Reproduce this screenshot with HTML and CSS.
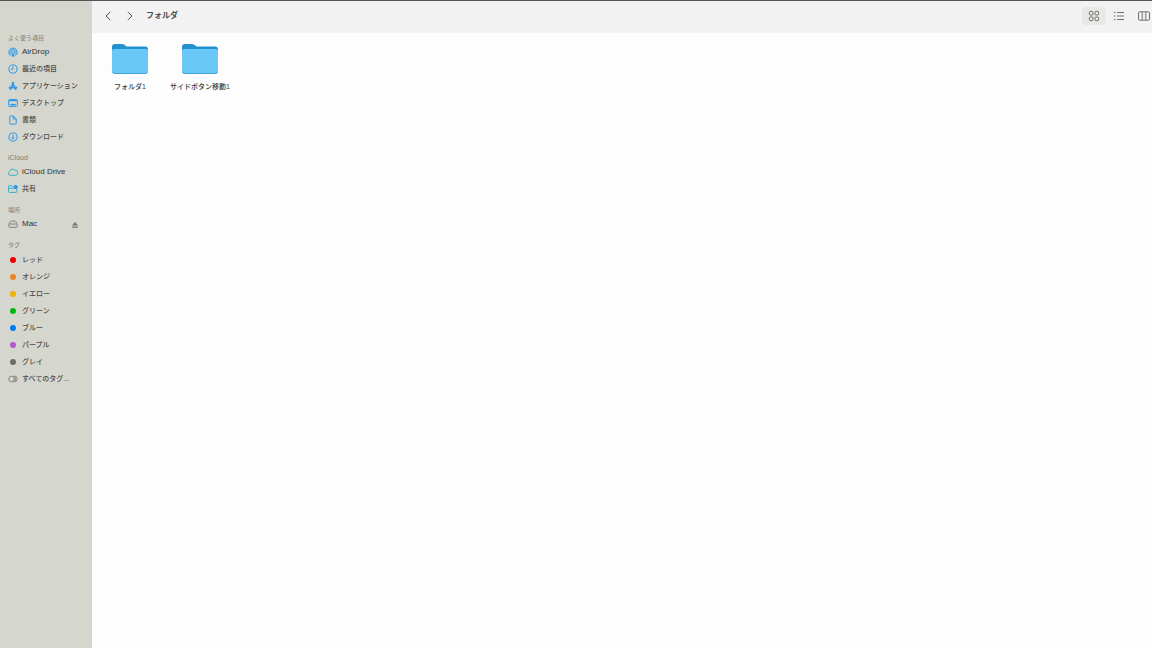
FILE: index.html
```html
<!DOCTYPE html>
<html lang="ja">
<head>
  <meta charset="UTF-8" />
  <meta name="viewport" content="width=device-width, initial-scale=1.0"/>
  <title>フォルダ</title>
  <link rel="stylesheet" href="styles.css">
</head>
<body>

  <nav class="sidebar">
    <h2>よく使う項目</h2>
    <ul>
      <li><a class="latin" href="#">
        <svg class="icon blue" viewBox="0 0 10 10"><circle class="halo" cx="5" cy="5" r="4.6"/><path d="M2.4 8.4A4.1 4.1 0 1 1 7.6 8.4" stroke-width="1"/><path d="M3.4 6.6A2.2 2.2 0 1 1 6.6 6.6" stroke-width=".9"/><path class="solid" d="M5 4.8L6.4 9.4H3.6Z"/></svg>
        AirDrop</a></li>
      <li><a href="#">
        <svg class="icon blue" viewBox="0 0 10 10"><circle cx="5" cy="5" r="4.1"/><path d="M5 2.4V5.2H2.8"/></svg>
        最近の項目</a></li>
      <li><a href="#">
        <svg class="icon blue" viewBox="0 0 10 10"><path d="M4.3 1.2L7.9 8.8M5.7 1.2L2.1 8.8M.8 6.6H9.2" stroke-width="1.6"/></svg>
        アプリケーション</a></li>
      <li><a href="#">
        <svg class="icon blue" viewBox="0 0 10 10"><rect x=".6" y="1.6" width="8.8" height="6.8" rx="1"/><path d="M1 2.6H9" stroke-width="1.2"/><path d="M2.2 6.7H7.8" stroke-width="1.6"/></svg>
        デスクトップ</a></li>
      <li><a href="#">
        <svg class="icon blue" viewBox="0 0 10 10"><path d="M1.8 1.7Q1.8 1 2.5 1H5.4L8.2 3.8V8.4Q8.2 9.1 7.5 9.1H2.5Q1.8 9.1 1.8 8.4ZM5.3 1.1V4H8.1"/></svg>
        書類</a></li>
      <li><a href="#">
        <svg class="icon blue" viewBox="0 0 10 10"><circle cx="5" cy="5" r="4.1"/><path d="M5 2.5V7M3.3 5.5L5 7.2L6.7 5.5"/></svg>
        ダウンロード</a></li>
    </ul>

    <h2 class="latin">iCloud</h2>
    <ul>
      <li><a class="latin" href="#">
        <svg class="icon teal" viewBox="0 0 10 10"><path d="M2.3 8.3A2 2 0 0 1 1.8 4.5A2.8 2.8 0 0 1 6.9 3.3A2.5 2.5 0 0 1 7.6 8.3Z"/></svg>
        iCloud Drive</a></li>
      <li><a href="#">
        <svg class="icon teal" viewBox="0 0 10 10"><path d="M.6 2.2Q.6 1.6 1.2 1.6H3.2L4 2.5H5.6M.6 2V7.6Q.6 8.4 1.4 8.4H8Q8.8 8.4 8.8 7.6V5M.8 4.3H8.6"/><circle class="badge" cx="7.8" cy="2.9" r="2"/></svg>
        共有</a></li>
    </ul>

    <h2>場所</h2>
    <ul>
      <li><a class="latin" href="#">
        <svg class="icon gray" viewBox="0 0 10 10"><path d="M.9 5.4L2.2 2.6Q2.5 2 3.1 2H6.9Q7.5 2 7.8 2.6L9.1 5.4"/><rect x=".8" y="5" width="8.4" height="3.3" rx="1"/></svg>
        Mac</a>
        <button class="eject" aria-label="取り出す"><svg viewBox="0 0 8 8"><path d="M4 1L7 4.6H1ZM1 5.6H7V6.8H1Z"/></svg></button></li>
    </ul>

    <h2>タグ</h2>
    <ul class="tags">
      <li><a href="#"><span class="dot red"></span>レッド</a></li>
      <li><a href="#"><span class="dot orange"></span>オレンジ</a></li>
      <li><a href="#"><span class="dot yellow"></span>イエロー</a></li>
      <li><a href="#"><span class="dot green"></span>グリーン</a></li>
      <li><a href="#"><span class="dot azure"></span>ブルー</a></li>
      <li><a href="#"><span class="dot purple"></span>パープル</a></li>
      <li><a href="#"><span class="dot dark"></span>グレイ</a></li>
      <li><a href="#">
        <svg class="icon gray" viewBox="0 0 10 10"><circle cx="3.6" cy="5" r="2.8"/><path d="M5.2 2.2H6.4A2.8 2.8 0 0 1 6.4 7.8H5.2M7.2 2.8V7.2"/></svg>
        すべてのタグ...</a></li>
    </ul>
  </nav>

  <div class="window">
    <header class="toolbar">
      <button class="nav" aria-label="戻る"><svg viewBox="0 0 10 10"><path d="M7.2 1L3 5L7.2 9"/></svg></button>
      <button class="nav" aria-label="進む"><svg viewBox="0 0 10 10"><path d="M2.8 1L7 5L2.8 9"/></svg></button>
      <h1>フォルダ</h1>
      <div class="views">
        <button class="view active" aria-label="アイコン"><svg viewBox="0 0 12 12"><rect x="1.4" y="1.4" width="3.6" height="3.6" rx=".8"/><rect x="7" y="1.4" width="3.6" height="3.6" rx=".8"/><rect x="1.4" y="7" width="3.6" height="3.6" rx=".8"/><rect x="7" y="7" width="3.6" height="3.6" rx=".8"/></svg></button>
        <button class="view" aria-label="リスト"><svg viewBox="0 0 12 12"><path d="M1 2.5H2.5M1 6H2.5M1 9.5H2.5M4 2.5H11M4 6H11M4 9.5H11"/></svg></button>
        <button class="view" aria-label="カラム"><svg viewBox="0 0 12 12"><rect x=".6" y="1.8" width="10.8" height="8.4" rx="1"/><path d="M4.2 2V10M7.8 2V10"/></svg></button>
      </div>
    </header>

    <main class="files">
      <a class="file" href="#">
        <svg viewBox="0 0 38 32"><path class="back" d="M1 4Q1 1 4 1H10.5Q12.5 1 14 2.2L15.5 3.5H34Q37 3.5 37 6.5V12H1Z"/><path class="front" d="M1 8Q1 6 3 6H35Q37 6 37 8V28Q37 31 34 31H4Q1 31 1 28Z"/><path class="edge" d="M1.4 28.8Q2 30.5 4 30.5H34Q36 30.5 36.6 28.8"/></svg>
        <span>フォルダ1</span>
      </a>
      <a class="file" href="#">
        <svg viewBox="0 0 38 32"><path class="back" d="M1 4Q1 1 4 1H10.5Q12.5 1 14 2.2L15.5 3.5H34Q37 3.5 37 6.5V12H1Z"/><path class="front" d="M1 8Q1 6 3 6H35Q37 6 37 8V28Q37 31 34 31H4Q1 31 1 28Z"/><path class="edge" d="M1.4 28.8Q2 30.5 4 30.5H34Q36 30.5 36.6 28.8"/></svg>
        <span>サイドボタン移動1</span>
      </a>
    </main>
  </div>

</body>
</html>
```

FILE: styles.css
```css
* {
  box-sizing: border-box;
}
body {
  margin: 0;
  min-height: 100vh;
  display: flex;
  border-top: 1px solid #565356;
  background: #fdfdfd;
  color: #4c4c49;
  font-family: "Liberation Sans", "Noto Sans CJK JP", sans-serif;
  font-size: 7px;
  font-weight: 500;
}
h1, h2, ul {
  margin: 0;
  padding: 0;
}
a {
  color: inherit;
  text-decoration: none;
}
button {
  display: flex;
  align-items: center;
  justify-content: center;
  padding: 0;
  border: none;
  background: none;
}
svg {
  fill: none;
  stroke: currentColor;
}

/* sidebar */
.sidebar {
  flex: none;
  width: 92px;
  padding: 31px 8px 8px;
  background: #d5d6ce;
}
.sidebar h2 {
  color: #8d8d87;
  font-size: 6px;
  font-weight: 500;
  line-height: 12px;
}
.sidebar h2.latin {
  color: #7c7c77;
  font-size: 7px;
}
.sidebar ul {
  margin-bottom: 6px;
  list-style: none;
}
.sidebar .tags {
  padding-top: 1px;
}
.sidebar li {
  display: flex;
  align-items: center;
  height: 17px;
}
.sidebar a {
  flex: 1;
  display: flex;
  align-items: center;
  gap: 4px;
  line-height: 16px;
  padding-bottom: 1px;
  white-space: nowrap;
}
.sidebar a.latin {
  color: #333331;
  font-size: 8px;
}
.icon {
  flex: none;
  width: 10px;
  height: 10px;
}
.blue {
  color: #2f98e8;
}
.teal {
  color: #35afc8;
}
.gray {
  color: #858581;
}
.solid {
  fill: currentColor;
  stroke: none;
}
.halo {
  fill: #a3c6dc;
  stroke: none;
}
.badge {
  fill: #2f8fe0;
  stroke: none;
}
.eject {
  width: 8px;
  height: 8px;
  margin-right: 5px;
  color: #777773;
}
.eject svg {
  width: 8px;
  height: 8px;
  fill: currentColor;
  stroke: none;
}
.dot {
  width: 6px;
  height: 6px;
  margin: 0 2px;
  border-radius: 50%;
}
.red { background: #ee0000; }
.orange { background: #ee8422; }
.yellow { background: #efb300; }
.green { background: #00b80c; }
.azure { background: #007af0; }
.purple { background: #b457cc; }
.dark { background: #6c6c6a; }

/* window */
.window {
  flex: 1;
  min-width: 0;
}
.toolbar {
  display: flex;
  align-items: center;
  height: 32px;
  padding: 0 0 2px 10px;
  background: #f2f2f2;
}
.nav {
  width: 12px;
  height: 20px;
  margin-right: 10px;
  color: #555;
}
.nav svg {
  width: 10px;
  height: 10px;
}
.toolbar h1 {
  font-size: 8px;
  font-weight: 600;
  line-height: 16px;
}
.views {
  display: flex;
  margin-left: auto;
  gap: 1px;
}
.view {
  width: 24px;
  height: 18px;
  border-radius: 4px;
  color: #70706e;
}
.view.active {
  background: #e8e8e7;
}
.view svg {
  width: 12px;
  height: 12px;
}
/* the last button runs up to the window edge */
.view:last-child {
  width: 20px;
  justify-content: flex-start;
  padding-left: 6px;
}
.files {
  display: flex;
  flex-wrap: wrap;
  padding: 10px 3px;
}
.file {
  display: flex;
  flex-direction: column;
  align-items: center;
  gap: 6px;
  width: 70px;
  color: #3c3c3c;
  line-height: 12px;
  white-space: nowrap;
}
.file svg {
  width: 38px;
  height: 32px;
  stroke: none;
}
.back {
  fill: #2391d0;
}
.front {
  fill: #69c8f7;
}
.file .edge {
  stroke: #3fa4d8;
}
```
